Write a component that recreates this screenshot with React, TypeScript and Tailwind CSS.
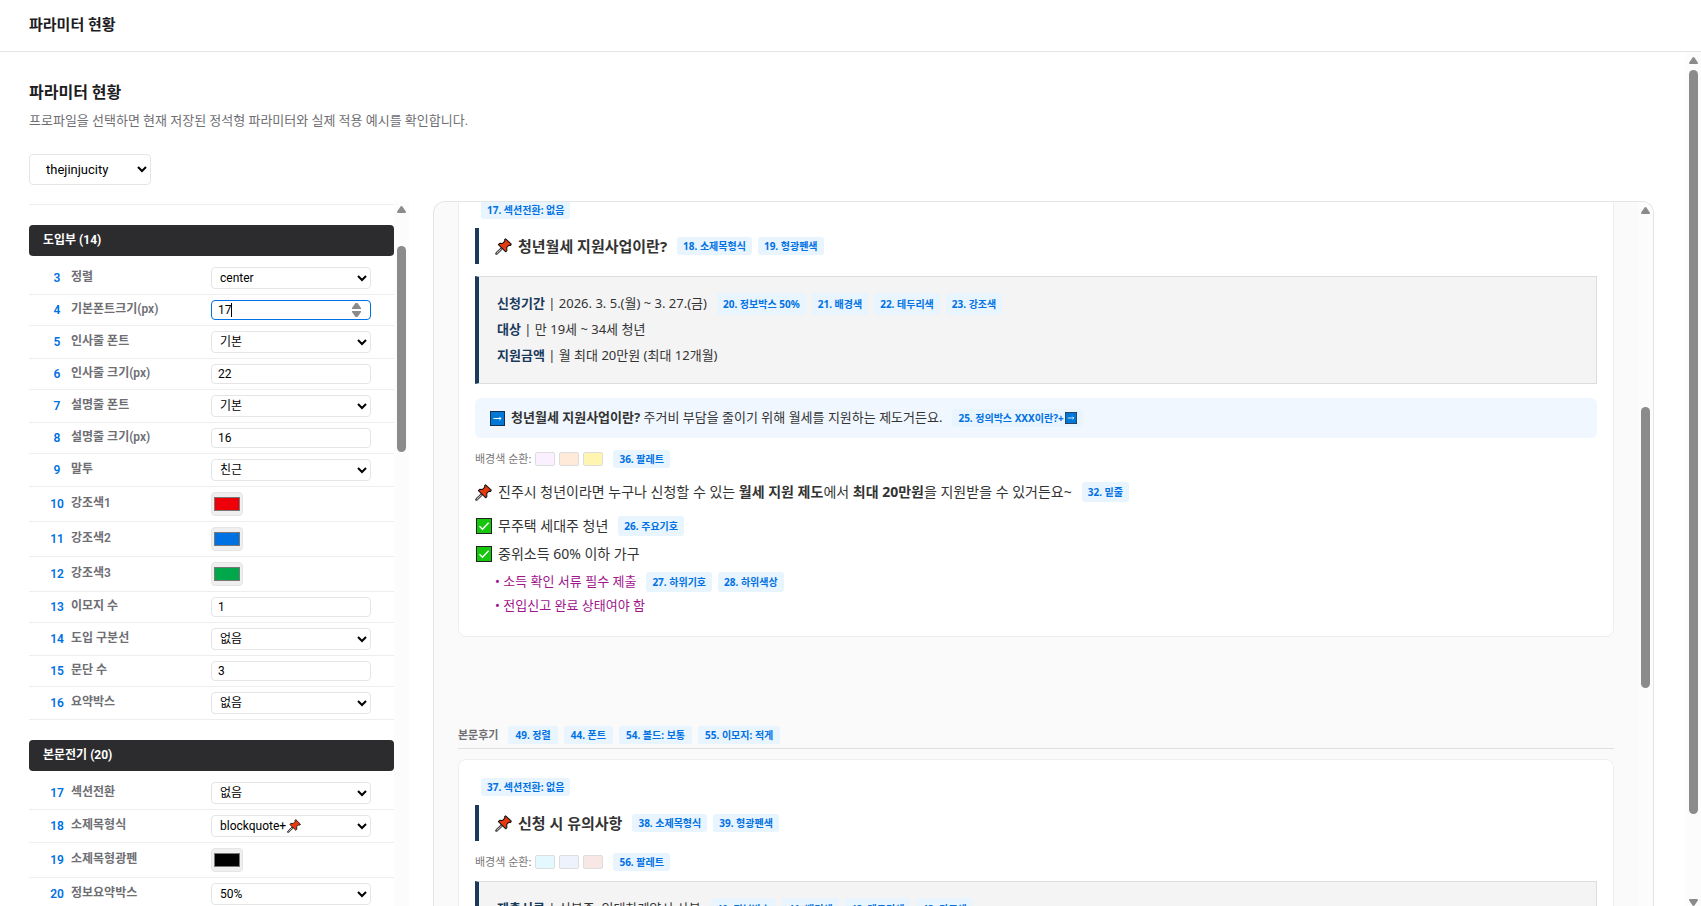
import React from 'react';
import clsx from 'clsx';

type FieldType = 'select' | 'number' | 'color';

interface Field {
  no: number;
  label: string;
  type: FieldType;
  value: string;
  pin?: boolean;
  active?: boolean;
}

interface FieldGroup {
  title: string;
  fields: Field[];
}

const GROUPS: FieldGroup[] = [
  {
    title: '도입부 (14)',
    fields: [
      { no: 3, label: '정렬', type: 'select', value: 'center' },
      { no: 4, label: '기본폰트크기(px)', type: 'number', value: '17', active: true },
      { no: 5, label: '인사줄 폰트', type: 'select', value: '기본' },
      { no: 6, label: '인사줄 크기(px)', type: 'number', value: '22' },
      { no: 7, label: '설명줄 폰트', type: 'select', value: '기본' },
      { no: 8, label: '설명줄 크기(px)', type: 'number', value: '16' },
      { no: 9, label: '말투', type: 'select', value: '친근' },
      { no: 10, label: '강조색1', type: 'color', value: '#ee0008' },
      { no: 11, label: '강조색2', type: 'color', value: '#0071e3' },
      { no: 12, label: '강조색3', type: 'color', value: '#00a84b' },
      { no: 13, label: '이모지 수', type: 'number', value: '1' },
      { no: 14, label: '도입 구분선', type: 'select', value: '없음' },
      { no: 15, label: '문단 수', type: 'number', value: '3' },
      { no: 16, label: '요약박스', type: 'select', value: '없음' },
    ],
  },
  {
    title: '본문전기 (20)',
    fields: [
      { no: 17, label: '섹션전환', type: 'select', value: '없음' },
      { no: 18, label: '소제목형식', type: 'select', value: 'blockquote+', pin: true },
      { no: 19, label: '소제목형광펜', type: 'color', value: '#000000' },
      { no: 20, label: '정보요약박스', type: 'select', value: '50%' },
    ],
  },
];

const PinIcon = ({ className }: { className?: string }) => (
  <svg viewBox="0 0 18 18" className={clsx('shrink-0', className)} aria-hidden="true">
    <path d="M6.6 10.2 8 11.6 2.4 17 .8 17.2 1 15.6Z" fill="#b8b8b8" stroke="#111" strokeWidth="1" strokeLinejoin="round" />
    <path
      d="M11.2.8 17.2 6.6 16.6 7.8 14.8 7.6 12.4 10 12.6 13.2 11.4 14.6 3.6 7 5 5.6 8 5.8 10.4 3.4 10.2 1.8Z"
      fill="#e8380d"
      stroke="#111"
      strokeWidth="1.1"
      strokeLinejoin="round"
    />
  </svg>
);

const CheckIcon = () => (
  <svg viewBox="0 0 16 16" className="h-4 w-4 shrink-0" aria-hidden="true">
    <rect x="0.5" y="0.5" width="15" height="15" fill="#16c60c" stroke="#222" />
    <path d="M3.5 8.2 6.5 11.2 12.6 4.8" fill="none" stroke="#fff" strokeWidth="1.4" />
  </svg>
);

const ArrowIcon = ({ className }: { className?: string }) => (
  <svg viewBox="0 0 15 15" className={clsx('shrink-0', className)} aria-hidden="true">
    <rect x="0.5" y="0.5" width="14" height="14" fill="#0078d7" stroke="#17304a" />
    <path d="M3.5 7.5H11M9.4 5.9 11 7.5 9.4 9.1" fill="none" stroke="#fff" strokeWidth="1" />
  </svg>
);

const ScrollArrow = ({ down = false }: { down?: boolean }) => (
  <svg viewBox="0 0 9 7" className={clsx('h-[7px] w-[9px] shrink-0', down && 'rotate-180')} aria-hidden="true">
    <path d="M4.5 0C5 0 5.3.3 5.6.7L8.8 5.4C9.2 6.2 8.9 7 8 7H1C.1 7-.2 6.2.2 5.4L3.4.7C3.7.3 4 0 4.5 0Z" fill="#8b8b8b" />
  </svg>
);

const Scrollbar = ({ thumb, down = false }: { thumb: string; down?: boolean }) => (
  <div className="flex w-[15px] shrink-0 flex-col items-center bg-[#fcfcfc] pt-[5px]" aria-hidden="true">
    <ScrollArrow />
    <div className={clsx('w-[9px] shrink-0 rounded-full bg-[#8b8b8b]', thumb)} />
    {down && (
      <div className="mt-auto">
        <ScrollArrow down />
      </div>
    )}
  </div>
);

const FieldControl = ({ field }: { field: Field }) => {
  const id = `param-${field.no}`;

  if (field.type === 'color') {
    return <input id={id} type="color" defaultValue={field.value} className="h-6 w-8 rounded border border-[#e5e5e5] bg-[#efefef]" />;
  }

  if (field.type === 'select') {
    return (
      <div className="relative flex w-40">
        <select id={id} className="h-[22px] w-full rounded border border-[#e5e5e5] bg-white px-1 text-xs text-black">
          <option>{field.value}</option>
        </select>
        {field.pin && <PinIcon className="absolute left-[76px] top-1 h-[14px] w-[14px]" />}
      </div>
    );
  }

  return (
    <div className="relative flex w-40">
      <input
        id={id}
        type="number"
        defaultValue={field.value}
        className={clsx(
          'h-5 w-full appearance-none rounded border bg-white px-[6px] text-xs text-black outline-none [&::-webkit-inner-spin-button]:appearance-none',
          field.active ? 'border-[#0071e3]' : 'border-[#e5e5e5]',
        )}
      />
      {field.active && (
        <>
          <span className="absolute left-5 top-[3px] h-[14px] w-px bg-black" />
          <span className="absolute right-[10px] top-[3px] flex flex-col gap-[2px]">
            <svg viewBox="0 0 9 6" className="h-[6px] w-[9px]" aria-hidden="true">
              <path d="M3.5 0H5.5L9 5V6H0V5Z" fill="#8b8b8b" />
            </svg>
            <svg viewBox="0 0 9 6" className="h-[6px] w-[9px]" aria-hidden="true">
              <path d="M3.5 6H5.5L9 1V0H0V1Z" fill="#8b8b8b" />
            </svg>
          </span>
        </>
      )}
    </div>
  );
};

const FieldRow = ({ field }: { field: Field }) => (
  <div className="flex items-center border-b border-[#eeeeee] py-[5px] pl-[14px]">
    <span className="w-7 text-center text-xs font-semibold text-[#0071e3]">{field.no}</span>
    <label htmlFor={`param-${field.no}`} className="w-[140px] pb-[2px] text-xs font-semibold text-[#6e6e73]">
      {field.label}
    </label>
    <FieldControl field={field} />
  </div>
);

const Badges = ({ items, className = 'h-[18px] px-[6px]' }: { items: React.ReactNode[]; className?: string }) => (
  <span className="ml-[10px] flex gap-[6px]">
    {items.map((item, i) => (
      <span key={i} className={clsx('flex items-center rounded-[3px] bg-[#e8f4fe] text-[10px] font-bold text-[#0071e3]', className)}>
        {item}
      </span>
    ))}
  </span>
);

const CardHeading = ({ title, badges }: { title: string; badges: string[] }) => (
  <div className="mt-[9px] flex h-9 items-center border-l-4 border-[#1a3a5c] pl-4">
    <PinIcon className="mr-[6px] h-[17px] w-[17px]" />
    <h3 className="text-[15px] font-bold">{title}</h3>
    <Badges items={badges} />
  </div>
);

const Palette = ({ colors, badge }: { colors: string[]; badge: string }) => (
  <div className="mt-3 flex items-center">
    <span className="mr-1 text-[11px] text-[#777777]">배경색 순환:</span>
    <span className="flex gap-1">
      {colors.map((color) => (
        <span key={color} className="h-[14px] w-5 rounded-[2px] border border-[#dddddd]" style={{ backgroundColor: color }} />
      ))}
    </span>
    <Badges items={[badge]} />
  </div>
);

const InfoLine = ({ name, text, badges }: { name: string; text: string; badges?: string[] }) => (
  <div className="flex h-[26px] items-center">
    <p>
      <strong className="font-bold text-[#1a3a5c]">{name}</strong> | {text}
    </p>
    {badges && <Badges items={badges} className="h-[22px] px-[6px]" />}
  </div>
);

const infoBox = 'border border-l-4 border-[#dddddd] border-l-[#1a3a5c] bg-[#f4f4f4] px-[18px] py-[14px] text-[13px]';
const card = 'rounded-lg border border-[#eeeeee] bg-white px-4 py-[18px]';

const Preview: React.FC = () => (
  <div className="-mt-5 min-w-0 flex-1 px-6 font-['Noto_Sans','Noto_Sans_CJK_KR',sans-serif] text-[#333333]">
    <section className={card}>
      <div className="-ml-1 flex">
        <Badges items={['17. 섹션전환: 없음']} />
      </div>
      <CardHeading title="청년월세 지원사업이란?" badges={['18. 소제목형식', '19. 형광펜색']} />
      <div className={clsx('mt-3', infoBox)}>
        <InfoLine
          name="신청기간"
          text="2026. 3. 5.(월) ~ 3. 27.(금)"
          badges={['20. 정보박스 50%', '21. 배경색', '22. 테두리색', '23. 강조색']}
        />
        <InfoLine name="대상" text="만 19세 ~ 34세 청년" />
        <InfoLine name="지원금액" text="월 최대 20만원 (최대 12개월)" />
      </div>
      <div className="mt-[14px] flex h-10 items-center rounded-md bg-[#f0f7ff] px-[15px] text-[13px]">
        <ArrowIcon className="mr-[6px] h-[15px] w-[15px]" />
        <p>
          <strong className="font-bold">청년월세 지원사업이란?</strong> 주거비 부담을 줄이기 위해 월세를 지원하는 제도거든요.
        </p>
        <Badges
          items={[
            <React.Fragment key="arrow">
              25. 정의박스 XXX이란?+
              <ArrowIcon className="ml-px h-3 w-3" />
            </React.Fragment>,
          ]}
        />
      </div>
      <Palette colors={['#faf0ff', '#ffe9d9', '#fff5b1']} badge="36. 팔레트" />
      <div className="mt-3 flex h-6 items-center text-sm">
        <PinIcon className="mr-[6px] h-[17px] w-[17px]" />
        <p>
          진주시 청년이라면 누구나 신청할 수 있는 <strong className="font-bold">월세 지원 제도</strong>에서{' '}
          <strong className="font-bold">최대 20만원</strong>을 지원받을 수 있거든요~
        </p>
        <Badges items={['32. 밑줄']} className="h-5 px-[6px]" />
      </div>
      <ul className="mt-[10px] flex flex-col gap-1 pl-px text-sm">
        <li className="flex h-6 items-center">
          <CheckIcon />
          <span className="ml-[6px]">무주택 세대주 청년</span>
          <Badges items={['26. 주요기호']} className="h-5 px-[6px]" />
        </li>
        <li className="flex h-6 items-center">
          <CheckIcon />
          <span className="ml-[6px]">중위소득 60% 이하 가구</span>
        </li>
      </ul>
      <ul className="mt-1 pl-5 text-[13px] text-[#a0148c]">
        <li className="flex h-6 items-center">
          • 소득 확인 서류 필수 제출
          <Badges items={['27. 하위기호', '28. 하위색상']} className="h-5 px-[6px]" />
        </li>
        <li className="flex h-6 items-center">• 전입신고 완료 상태여야 함</li>
      </ul>
    </section>

    <div className="mt-[89px] flex items-center border-b border-[#e0e0e0] pb-1">
      <h2 className="text-[11px] font-semibold text-[#6e6e73]">본문후기</h2>
      <Badges items={['49. 정렬', '44. 폰트', '54. 볼드: 보통', '55. 이모지: 적게']} className="h-[18px] px-[7px]" />
    </div>

    <section className={clsx('mt-[10px]', card)}>
      <div className="-ml-1 flex">
        <Badges items={['37. 섹션전환: 없음']} />
      </div>
      <CardHeading title="신청 시 유의사항" badges={['38. 소제목형식', '39. 형광펜색']} />
      <Palette colors={['#e3f8ff', '#edf2fc', '#f7e8e6']} badge="56. 팔레트" />
      <div className={clsx('mt-[10px]', infoBox)}>
        <InfoLine
          name="제출서류"
          text="신분증, 임대차계약서 사본"
          badges={['40. 정보박스', '41. 배경색', '42. 테두리색', '43. 강조색']}
        />
      </div>
    </section>
  </div>
);

export default function App() {
  return (
    <div className="flex h-screen flex-col overflow-hidden bg-white font-[Roboto,'Noto_Sans_CJK_KR',sans-serif] text-[#1d1d1f]">
      <header className="flex h-[52px] shrink-0 items-center border-b border-[#e5e5e5] px-[29px]">
        <h1 className="text-[15px] font-bold">파라미터 현황</h1>
      </header>

      <div className="flex min-h-0 flex-1">
        <main className="flex min-w-0 flex-1 flex-col pl-[29px] pr-8 pt-[29px]">
          <h2 className="text-base font-bold">파라미터 현황</h2>
          <p className="mt-[6px] text-[13px] leading-5 text-[#6e6e73]">
            프로파일을 선택하면 현재 저장된 정석형 파라미터와 실제 적용 예시를 확인합니다.
          </p>
          <select
            aria-label="프로파일"
            className="mb-4 mt-[23px] h-[31px] w-[122px] shrink-0 rounded border border-[#e5e5e5] bg-white pl-3 text-[13px] text-black"
          >
            <option>thejinjucity</option>
          </select>

          <div className="flex min-h-0 flex-1 gap-6">
            <aside className="flex w-[380px] shrink-0 overflow-hidden">
              <div className="min-w-0 flex-1">
                <div className="h-1 border-b border-[#eeeeee]" />
                {GROUPS.map((group) => (
                  <section key={group.title} className="mt-5">
                    <h3 className="mb-[6px] flex h-[31px] items-center rounded bg-[#2c2c2e] px-[14px] pb-[2px] text-xs font-bold text-white">
                      {group.title}
                    </h3>
                    {group.fields.map((field) => (
                      <FieldRow key={field.no} field={field} />
                    ))}
                  </section>
                ))}
              </div>
              <Scrollbar thumb="mt-[33px] h-[206px]" />
            </aside>

            <div className="flex min-w-0 flex-1 overflow-hidden rounded-t-xl border border-b-0 border-[#e5e5e5] bg-[#fafafa]">
              <Preview />
              <Scrollbar thumb="mt-[193px] h-[281px]" />
            </div>
          </div>
        </main>
        <Scrollbar thumb="mt-[6px] h-[744px]" down />
      </div>
    </div>
  );
}
